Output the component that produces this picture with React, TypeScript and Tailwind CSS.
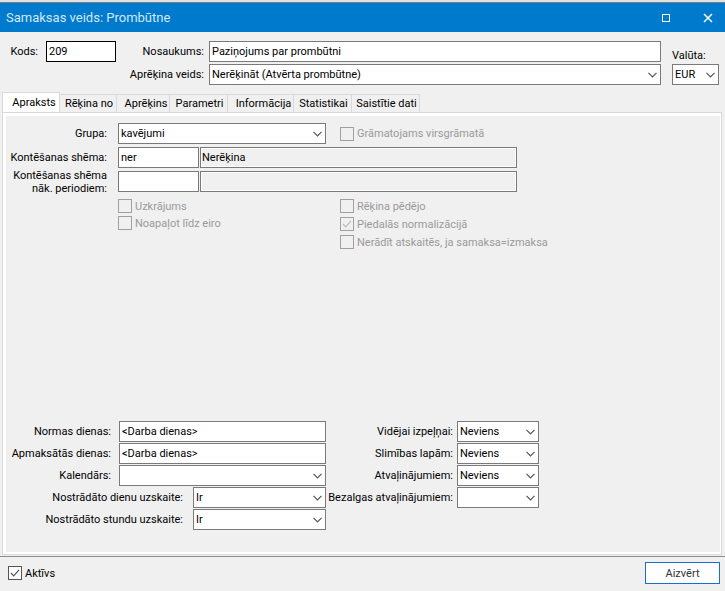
import React, { useState } from "react";

const tabs = [
  { title: "Apraksts", size: "w-[58px] pl-[6px]" },
  { title: "Rēķina no", size: "w-[57px] pl-[2px]" },
  { title: "Aprēķins", size: "w-[53px] pl-[6px]" },
  { title: "Parametri", size: "w-[58px] pl-[2px]" },
  { title: "Informācija", size: "w-[66px] pl-[6px]" },
  { title: "Statistikai", size: "w-[58px] pl-[2px]" },
  { title: "Saistītie dati", size: "w-[68px] pl-[2px]" },
];

const averages = [
  { id: "videjai", label: "Vidējai izpeļņai:", value: "Neviens" },
  { id: "slimibas", label: "Slimības lapām:", value: "Neviens" },
  { id: "atvalinajumiem", label: "Atvaļinājumiem:", value: "Neviens" },
  { id: "bezalgas", label: "Bezalgas atvaļinājumiem:", value: "" },
];

const box = "h-[21px] border border-[#7a7a7a] bg-white pl-[2px] outline-none";

function Select({ id, value, className }: { id: string; value: string; className: string }) {
  return (
    <div className={`relative ${className}`}>
      <select id={id} defaultValue={value} className={`${box} block w-full appearance-none pr-4`}>
        <option value={value}>{value}</option>
      </select>
      <svg
        viewBox="0 0 9 6"
        className="pointer-events-none absolute right-1 top-2 h-[6px] w-[9px] fill-none stroke-[#555]"
      >
        <path d="M0.5 0.8 L4.5 4.8 L8.5 0.8" strokeWidth="1.2" />
      </svg>
    </div>
  );
}

function Check({ label, checked, disabled }: { label: string; checked?: boolean; disabled?: boolean }) {
  return (
    <label className={`flex items-center gap-[3px] whitespace-nowrap ${disabled ? "text-[#9a9a9a]" : ""}`}>
      <span className="relative h-[14px] w-[14px] shrink-0">
        <input
          type="checkbox"
          defaultChecked={checked}
          disabled={disabled}
          className="peer block h-[14px] w-[14px] appearance-none border border-[#555] bg-white disabled:border-[#a0a0a0] disabled:bg-transparent"
        />
        <svg
          viewBox="0 0 14 14"
          className="pointer-events-none absolute inset-0 hidden h-[14px] w-[14px] fill-none stroke-[#555] peer-checked:block peer-disabled:stroke-[#bcbcbc]"
        >
          <path d="M3 7 L5.7 9.8 L11 3.8" strokeWidth="1.2" />
        </svg>
      </span>
      {label}
    </label>
  );
}

function Label({ htmlFor, className, children }: { htmlFor: string; className: string; children: React.ReactNode }) {
  return (
    <label htmlFor={htmlFor} className={`shrink-0 whitespace-nowrap text-right ${className}`}>
      {children}
    </label>
  );
}

export default function App() {
  const [active, setActive] = useState("Apraksts");

  return (
    <div className="flex min-h-screen flex-col border-t-2 border-[#e1e1e1] bg-[#f0f0f0] font-[Roboto,'DejaVu_Sans_Condensed',sans-serif] text-[11px] leading-[13px] text-black">
      <header className="flex h-[30px] items-center justify-between border-t border-[#7a7a7a] bg-[#007acc] pl-[6px] pr-3 text-white">
        <h1 className="text-[13px] text-[#d3e8f8]">Samaksas veids: Prombūtne</h1>
        <div className="flex items-center gap-8">
          <button aria-label="Maximize">
            <svg viewBox="0 0 10 10" className="h-[10px] w-[10px] fill-none stroke-white">
              <rect x="1.5" y="1.5" width="7" height="7" />
            </svg>
          </button>
          <button aria-label="Close">
            <svg viewBox="0 0 10 10" className="h-[10px] w-[10px] fill-none stroke-white">
              <path d="M1 1 L9 9 M9 1 L1 9" strokeWidth="1.5" />
            </svg>
          </button>
        </div>
      </header>

      <section className="flex items-start px-[6px] pt-[9px]">
        <div className="flex items-center gap-2 pl-1">
          <Label htmlFor="kods" className="w-7">Kods:</Label>
          <input id="kods" defaultValue="209" className="h-[21px] w-[70px] border border-black bg-white pl-[2px] outline-none" />
        </div>
        <div className="flex flex-1 flex-col gap-[2px]">
          <div className="flex items-center gap-[5px]">
            <Label htmlFor="nosaukums" className="w-[88px]">Nosaukums:</Label>
            <input id="nosaukums" defaultValue="Paziņojums par prombūtni" className={`${box} min-w-0 flex-1`} />
          </div>
          <div className="flex items-center gap-[5px]">
            <Label htmlFor="aprekina" className="w-[88px]">Aprēķina veids:</Label>
            <Select id="aprekina" value="Nerēķināt (Atvērta prombūtne)" className="min-w-0 flex-1" />
          </div>
        </div>
        <div className="ml-[11px] flex w-[47px] flex-col gap-[2px] pt-2">
          <label htmlFor="valuta">Valūta:</label>
          <Select id="valuta" value="EUR" className="w-full" />
        </div>
      </section>

      <div role="tablist" className="mt-[7px] flex items-end pl-[2px]">
        {tabs.map((tab) => (
          <button
            key={tab.title}
            role="tab"
            aria-selected={active === tab.title}
            onClick={() => setActive(tab.title)}
            className={`whitespace-nowrap border-r border-t border-[#d9d9d9] text-center ${tab.size} ${
              active === tab.title ? "h-5 border-l bg-white" : "h-[18px] bg-[#f0f0f0]"
            }`}
          >
            {tab.title}
          </button>
        ))}
      </div>

      <main className="ml-[2px] mr-[3px] flex flex-1 flex-col border border-[#d9d9d9]">
        <div className="flex flex-1 flex-col border-[3px] border-r border-b-2 border-white pb-[22px] pt-[7px]">
          <div className="flex items-center">
            <Label htmlFor="grupa" className="mr-[11px] w-[101px]">Grupa:</Label>
            <Select id="grupa" value="kavējumi" className="mr-[14px] w-[208px]" />
            <Check label="Grāmatojams virsgrāmatā" disabled />
          </div>
          <div className="mt-[3px] flex items-center">
            <Label htmlFor="shema" className="mr-[11px] w-[101px]">Kontēšanas shēma:</Label>
            <input id="shema" defaultValue="ner" className={`${box} mr-px w-[81px]`} />
            <input aria-label="Shēmas nosaukums" readOnly defaultValue="Nerēķina" className="h-[21px] w-[317px] border border-[#7a7a7a] bg-[#f0f0f0] pl-px shadow-[inset_0_0_0_1px_white] outline-none" />
          </div>
          <div className="mt-[3px] flex h-[21px] items-center">
            <Label htmlFor="periodi" className="mr-[11px] w-[101px]">
              Kontēšanas shēma
              <br />
              nāk. periodiem:
            </Label>
            <input id="periodi" className={`${box} mr-px w-[81px]`} />
            <input aria-label="Periodu shēmas nosaukums" readOnly className="h-[21px] w-[317px] border border-[#7a7a7a] bg-[#f0f0f0] pl-px shadow-[inset_0_0_0_1px_white] outline-none" />
          </div>
          <div className="mt-[7px] flex pl-28">
            <div className="flex w-[222px] flex-col gap-[3px]">
              <Check label="Uzkrājums" disabled />
              <Check label="Noapaļot līdz eiro" disabled />
            </div>
            <div className="flex flex-col gap-1">
              <Check label="Rēķina pēdējo" disabled />
              <Check label="Piedalās normalizācijā" checked disabled />
              <Check label="Nerādīt atskaitēs, ja samaksa=izmaksa" disabled />
            </div>
          </div>

          <div className="mt-auto flex items-start">
            <div className="flex flex-col gap-px">
              <div className="flex items-center gap-2">
                <Label htmlFor="normas" className="w-[105px]">Normas dienas:</Label>
                <input id="normas" defaultValue="<Darba dienas>" className={`${box} w-[207px]`} />
              </div>
              <div className="flex items-center gap-2">
                <Label htmlFor="apmaksatas" className="w-[105px]">Apmaksātās dienas:</Label>
                <input id="apmaksatas" defaultValue="<Darba dienas>" className={`${box} w-[207px]`} />
              </div>
              <div className="flex items-center gap-2">
                <Label htmlFor="kalendars" className="w-[105px]">Kalendārs:</Label>
                <Select id="kalendars" value="" className="w-[207px]" />
              </div>
              <div className="flex items-center gap-[10px]">
                <Label htmlFor="dienas" className="w-[177px]">Nostrādāto dienu uzskaite:</Label>
                <Select id="dienas" value="Ir" className="w-[133px]" />
              </div>
              <div className="flex items-center gap-[10px]">
                <Label htmlFor="stundas" className="w-[177px]">Nostrādāto stundu uzskaite:</Label>
                <Select id="stundas" value="Ir" className="w-[133px]" />
              </div>
            </div>
            <div className="flex flex-col gap-px">
              {averages.map((item) => (
                <div key={item.id} className="flex items-center gap-1">
                  <Label htmlFor={item.id} className="w-[127px]">{item.label}</Label>
                  <Select id={item.id} value={item.value} className="w-[82px]" />
                </div>
              ))}
            </div>
          </div>
        </div>
      </main>

      <footer className="mt-px flex items-center justify-between border-t border-[#8c8c8c] pb-[7px] pl-2 pr-[5px] pt-[5px]">
        <Check label="Aktīvs" checked />
        <button className="h-[22px] w-[75px] border border-[#1a6fc9] bg-white text-[#333]">Aizvērt</button>
      </footer>
    </div>
  );
}
